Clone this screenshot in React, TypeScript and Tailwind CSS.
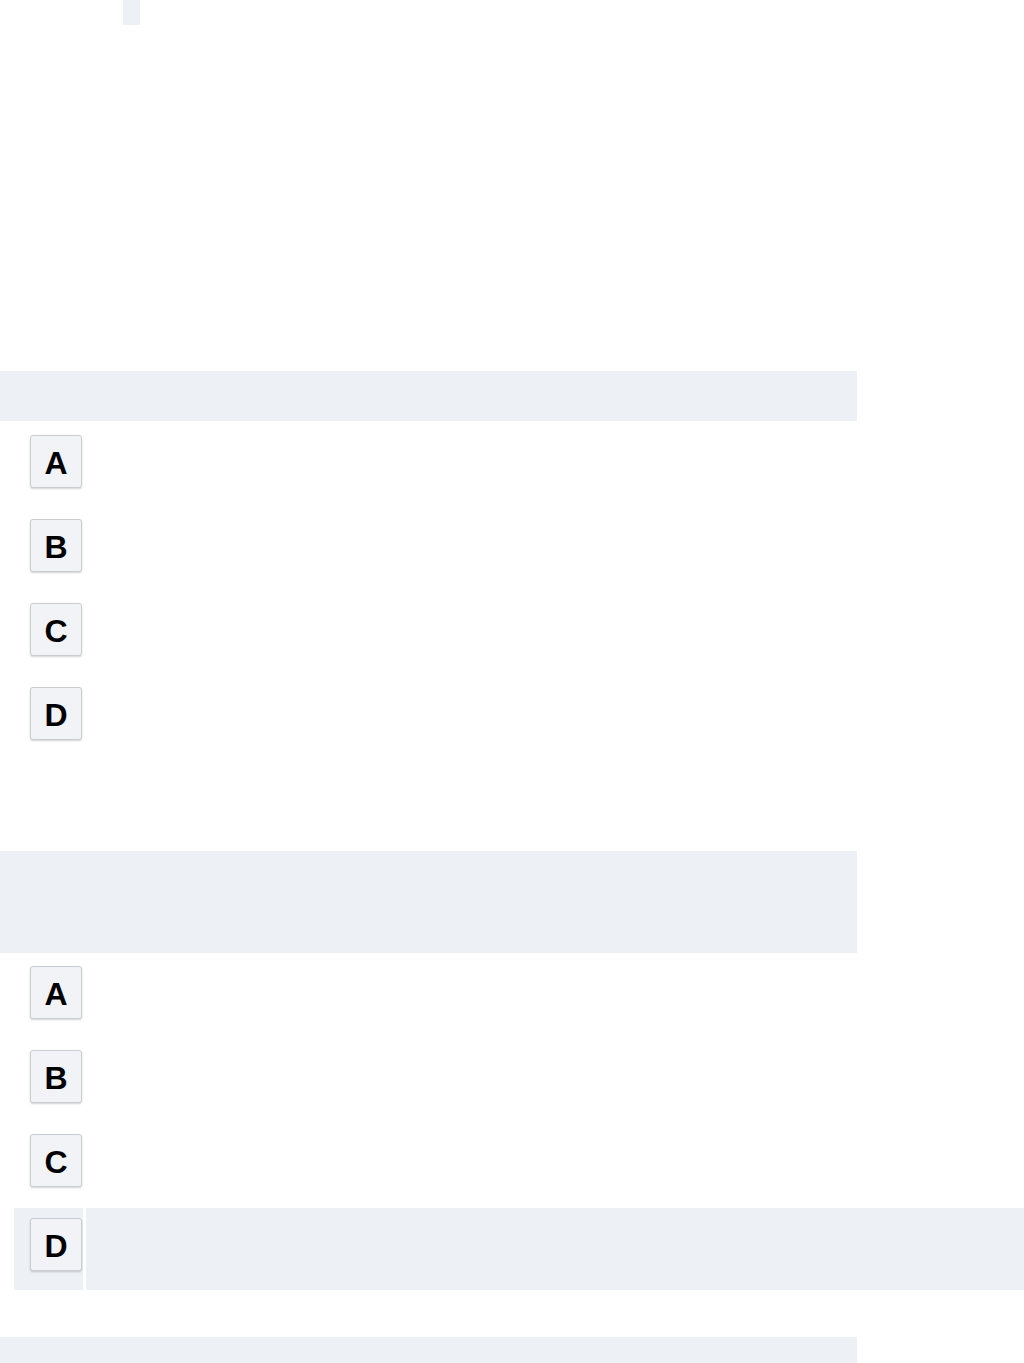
const letters = ["A", "B", "C", "D"];

function Key({ label }: { label: string }) {
  return (
    <div className="flex h-[53px] w-[52px] items-center justify-center rounded-[3px] border border-[#c9cdd2] bg-[#f1f3f6] pt-[2px] text-[32px] font-bold leading-none text-black shadow-[0_1px_2px_rgba(0,0,0,0.18)]">
      {label}
    </div>
  );
}

function OptionRow({ label, active }: { label: string; active?: boolean }) {
  return (
    <div className="flex h-[82px] gap-[3px] pl-[14px]">
      <div
        className={`w-[69px] pl-[16px] pt-[10px] ${active ? "bg-[#edf0f5]" : ""}`}
      >
        <Key label={label} />
      </div>
      <div className={`flex-1 ${active ? "bg-[#edf0f5]" : ""}`} />
    </div>
  );
}

export default function App() {
  return (
    <div
      className="min-h-[1363px] overflow-hidden bg-white"
      style={{ fontFamily: '"Liberation Sans", Arial, sans-serif' }}
    >
      <div className="ml-[123px] h-[25px] w-[17px] bg-[#edf0f5]" />

      <div className="mt-[346px] h-[50px] w-[857px] bg-[#edf0f5]" />
      <div className="mt-[4px] flex flex-col gap-[2px]">
        {letters.map((l) => (
          <OptionRow key={l} label={l} />
        ))}
      </div>

      <div className="mt-[92px] h-[102px] w-[857px] bg-[#edf0f5]" />
      <div className="mt-[3px] flex flex-col gap-[2px]">
        {letters.map((l) => (
          <OptionRow key={l} label={l} active={l === "D"} />
        ))}
      </div>

      <div className="mt-[47px] h-[26px] w-[857px] bg-[#edf0f5]" />
    </div>
  );
}
